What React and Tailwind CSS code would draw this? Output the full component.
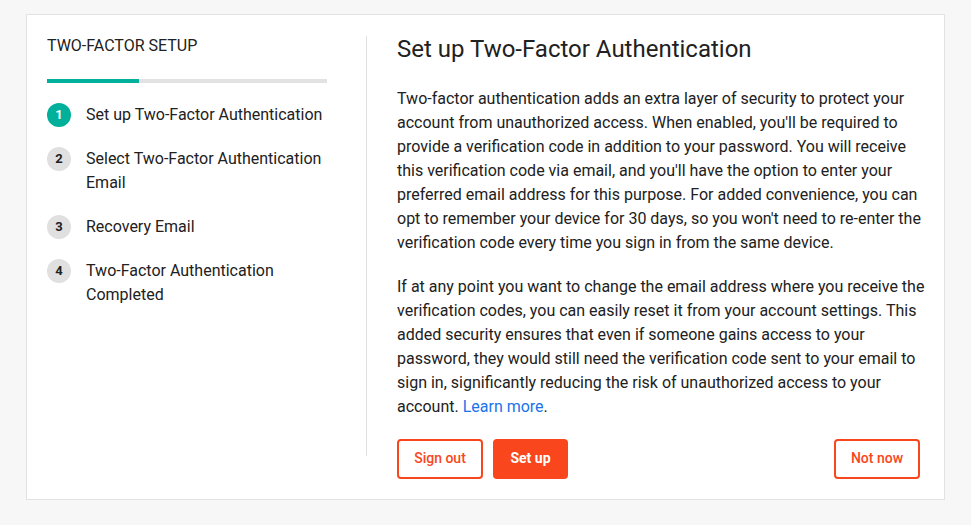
const steps = [
  { n: 1, label: "Set up Two-Factor Authentication", active: true },
  { n: 2, label: "Select Two-Factor Authentication Email" },
  { n: 3, label: "Recovery Email" },
  { n: 4, label: "Two-Factor Authentication Completed" },
];

export default function App() {
  return (
    <div
      className="min-h-[525px] bg-[#f7f7f7] pl-[26px] pt-[14px] text-[#212121]"
      style={{ fontFamily: "Roboto, 'Liberation Sans', sans-serif" }}
    >
      <div className="flex w-[919px] items-start border border-[#e2e2e2] bg-white pb-[20px] pl-[20px] pt-[18px]">
        {/* Steps sidebar */}
        <div className="mt-[3px] h-[420px] w-[320px] shrink-0 border-r border-[#e0e0e0]">
          <div className="text-[16px] leading-[20px] text-[#212121]">TWO-FACTOR SETUP</div>
          <div className="mt-[23px] flex h-[4px] w-[280px] bg-[#e2e2e2]">
            <div className="h-full w-[92px] bg-[#00b09b]" />
          </div>
          <div className="mt-[20px] flex w-[290px] flex-col gap-[20px]">
            {steps.map((s) => (
              <div key={s.n} className="flex items-start">
                <div
                  className={
                    s.active
                      ? "mr-[15px] flex h-[24px] w-[24px] shrink-0 items-center justify-center rounded-full bg-[#00b09b] text-[13px] font-bold text-white"
                      : "mr-[15px] flex h-[24px] w-[24px] shrink-0 items-center justify-center rounded-full bg-[#e0e0e0] text-[13px] font-bold text-[#212121]"
                  }
                >
                  {s.n}
                </div>
                <div className="text-[16px] leading-[24px]">{s.label}</div>
              </div>
            ))}
          </div>
        </div>

        {/* Main content */}
        <div className="w-[562px] pl-[30px]">
          <h1 className="text-[24px] leading-[32px] font-normal">Set up Two-Factor Authentication</h1>
          <p className="mt-[22px] text-[16px] leading-[24px]">
            Two-factor authentication adds an extra layer of security to protect your account from
            unauthorized access. When enabled, you'll be required to provide a verification code in
            addition to your password. You will receive this verification code via email, and you'll
            have the option to enter your preferred email address for this purpose. For added
            convenience, you can opt to remember your device for 30 days, so you won't need to
            re-enter the verification code every time you sign in from the same device.
          </p>
          <p className="mt-[20px] text-[16px] leading-[24px]">
            If at any point you want to change the email address where you receive the verification
            codes, you can easily reset it from your account settings. This added security ensures
            that even if someone gains access to your password, they would still need the
            verification code sent to your email to sign in, significantly reducing the risk of
            unauthorized access to your account.{" "}
            <a href="#" className="text-[#1a73e8]">
              Learn more
            </a>
            .
          </p>
          <div className="mt-[20px] flex items-center gap-[10px] pr-[9px]">
            <button className="h-[40px] w-[86px] rounded-[4px] border-2 border-[#f9461c] bg-white pb-[3px] text-[14px] leading-none font-medium text-[#f9461c]">
              Sign out
            </button>
            <button className="h-[40px] w-[75px] rounded-[4px] bg-[#f9461c] pb-[3px] text-[14px] leading-none font-bold text-white">
              Set up
            </button>
            <button className="ml-auto h-[40px] w-[86px] rounded-[4px] border-2 border-[#f9461c] bg-white pb-[3px] text-[14px] leading-none font-medium text-[#f9461c]">
              Not now
            </button>
          </div>
        </div>
      </div>
    </div>
  );
}
